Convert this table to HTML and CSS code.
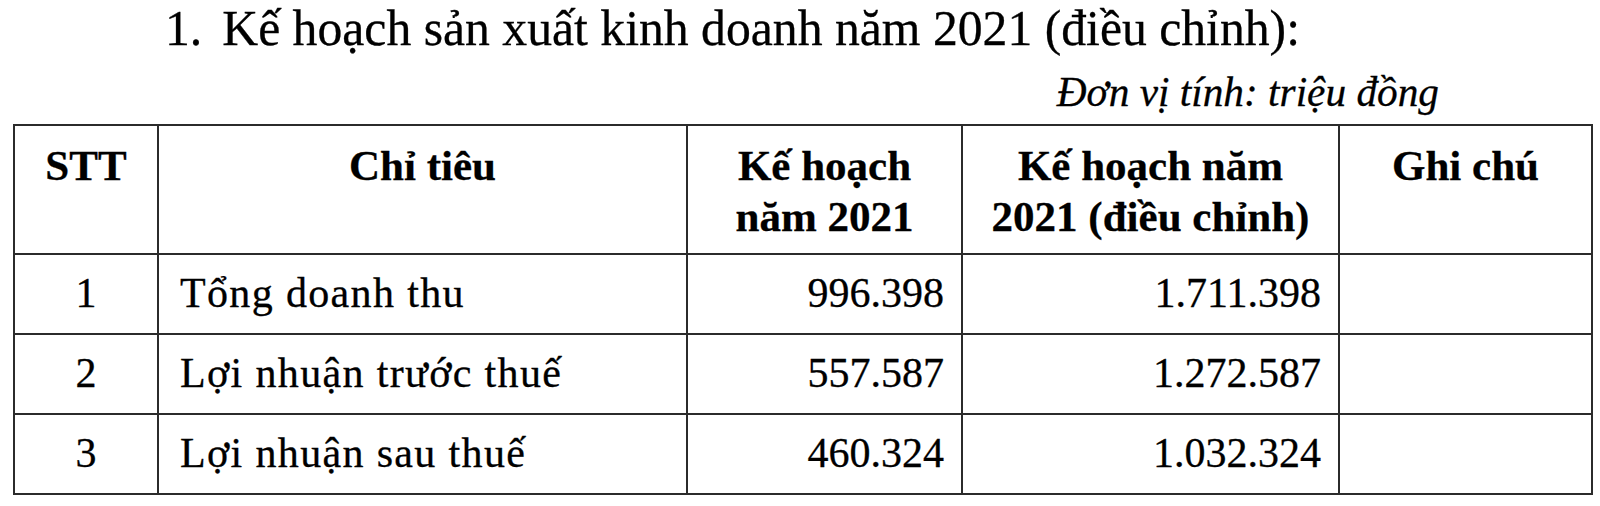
FILE: index.html
```html
<!DOCTYPE html>
<html lang="vi">
<head>
<meta charset="utf-8">
<title>Kế hoạch sản xuất kinh doanh năm 2021</title>
<link rel="stylesheet" href="styles.css">
</head>
<body>
<div class="page">
  <h1 class="title"><span class="num">1.</span>Kế hoạch sản xuất kinh doanh năm 2021 (điều chỉnh):</h1>
  <p class="unit">Đơn vị tính: triệu đồng</p>
  <table class="plan">
    <colgroup>
      <col class="c-stt">
      <col class="c-name">
      <col class="c-plan">
      <col class="c-adj">
      <col class="c-note">
    </colgroup>
    <thead>
      <tr>
        <th>STT</th>
        <th>Chỉ tiêu</th>
        <th>Kế hoạch<br>năm 2021</th>
        <th>Kế hoạch năm<br>2021 (điều chỉnh)</th>
        <th>Ghi chú</th>
      </tr>
    </thead>
    <tbody>
      <tr>
        <td class="center">1</td>
        <td class="left">Tổng doanh thu</td>
        <td class="right">996.398</td>
        <td class="right">1.711.398</td>
        <td></td>
      </tr>
      <tr>
        <td class="center">2</td>
        <td class="left">Lợi nhuận trước thuế</td>
        <td class="right">557.587</td>
        <td class="right">1.272.587</td>
        <td></td>
      </tr>
      <tr>
        <td class="center">3</td>
        <td class="left">Lợi nhuận sau thuế</td>
        <td class="right">460.324</td>
        <td class="right">1.032.324</td>
        <td></td>
      </tr>
    </tbody>
  </table>
</div>
</body>
</html>
```
FILE: styles.css
```css
html, body {
  margin: 0;
  padding: 0;
  background: #ffffff;
}

.page {
  font-family: "Liberation Serif", Tinos, "Times New Roman", Times, "Nimbus Roman", "Noto Serif", "DejaVu Serif", serif;
  color: #000000;
  padding: 0 0 0 13px;
  -webkit-text-stroke: 0.3px #000000;
}

.title {
  margin: 0;
  padding: 2px 0 0 152px;
  font-size: 49.7px;
  font-weight: normal;
  line-height: 54px;
}

.title .num {
  margin-right: 20px;
}

.unit {
  margin: 13px 0 9px 0;
  width: 1426px;
  text-align: right;
  font-style: italic;
  font-size: 41.3px;
  line-height: 46px;
}

.plan {
  border-collapse: collapse;
  table-layout: fixed;
  width: 1578px;
  font-size: 42px;
}

.c-stt { width: 144px; }
.c-name { width: 529px; }
.c-plan { width: 275px; }
.c-adj { width: 377px; }
.c-note { width: 253px; }

.plan th,
.plan td {
  border: 2px solid #2b2b2b;
}

.plan th {
  font-weight: bold;
  font-size: 43px;
  line-height: 51px;
  text-align: center;
  vertical-align: top;
  padding: 14px 4px 11px 4px;
  height: 98px;
}

.plan td {
  height: 59px;
  padding: 14px 17px 5px 21px;
  line-height: 48px;
  vertical-align: top;
}

.plan td.left {
  letter-spacing: 1.35px;
}

.plan td.center {
  text-align: center;
  padding-left: 4px;
  padding-right: 4px;
}

.plan td.right {
  text-align: right;
}
```
